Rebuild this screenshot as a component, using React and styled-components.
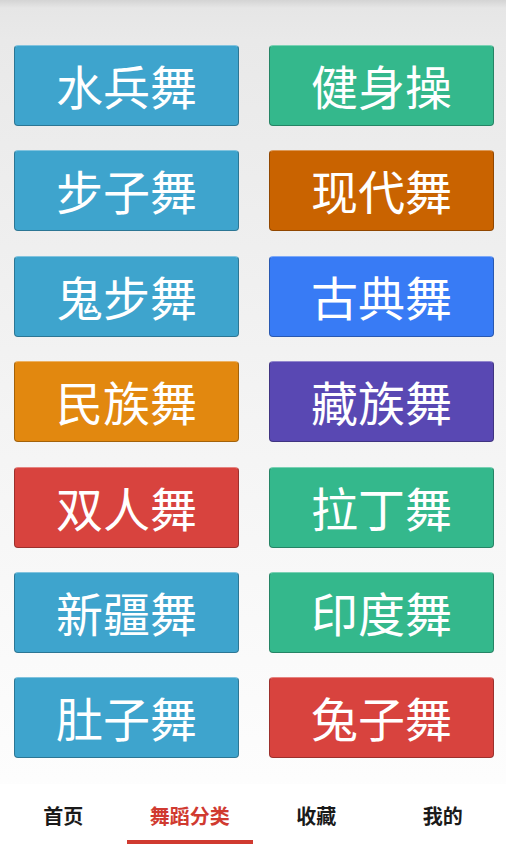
import React from 'react'
import styled, { createGlobalStyle } from 'styled-components'

const GlobalStyle = createGlobalStyle`
  html, body {
    margin: 0;
    padding: 0;
    height: 100%;
  }
  body {
    font-family: "Noto Sans CJK SC", "Noto Sans", sans-serif;
    background: #fff;
  }
`

const Page = styled.div`
  width: 506px;
  height: 844px;
  display: flex;
  flex-direction: column;
  background: linear-gradient(to bottom, #d4d4d4 0px, #e6e6e6 8px, #e9e9e9 40px, #f4f4f4 420px, #fdfdfd 780px, #ffffff 844px);
  overflow: hidden;
`

const Grid = styled.div`
  flex: 1;
  display: grid;
  grid-template-columns: 225px 225px;
  grid-auto-rows: 81px;
  column-gap: 30px;
  row-gap: 24.4px;
  padding: 45px 12px 0 14px;
  align-content: start;
`

const Tile = styled.div`
  background-color: ${({ bg }) => bg};
  border: 1px solid rgba(0, 0, 0, 0.28);
  border-top-color: rgba(255, 255, 255, 0.35);
  border-radius: 4px;
  display: flex;
  align-items: center;
  justify-content: center;
  color: #fff;
  font-size: 47px;
  font-weight: 400;
  line-height: 1;
  padding-bottom: 2px;
  box-sizing: border-box;
`

const TabBar = styled.div`
  height: 60px;
  display: grid;
  grid-template-columns: repeat(4, 1fr);
  background: #fff;
`

const Tab = styled.div`
  display: flex;
  align-items: center;
  justify-content: center;
  font-size: 20px;
  font-weight: 700;
  color: ${({ active }) => (active ? '#d03a30' : '#1a1a1a')};
  border-bottom: 4px solid ${({ active }) => (active ? '#d03a30' : 'transparent')};
  padding-top: 6px;
`

const tiles = [
  ['水兵舞', '#3ea4cd'],
  ['健身操', '#34b88c'],
  ['步子舞', '#3ea4cd'],
  ['现代舞', '#c96300'],
  ['鬼步舞', '#3ea4cd'],
  ['古典舞', '#387bf5'],
  ['民族舞', '#e2880f'],
  ['藏族舞', '#5948b3'],
  ['双人舞', '#d8433e'],
  ['拉丁舞', '#34b88c'],
  ['新疆舞', '#3ea4cd'],
  ['印度舞', '#34b88c'],
  ['肚子舞', '#3ea4cd'],
  ['兔子舞', '#d8433e'],
]

const tabs = ['首页', '舞蹈分类', '收藏', '我的']

export default function App() {
  return (
    <Page>
      <GlobalStyle />
      <Grid>
        {tiles.map(([name, bg]) => (
          <Tile key={name} bg={bg}>{name}</Tile>
        ))}
      </Grid>
      <TabBar>
        {tabs.map((t, i) => (
          <Tab key={t} active={i === 1}>{t}</Tab>
        ))}
      </TabBar>
    </Page>
  )
}
